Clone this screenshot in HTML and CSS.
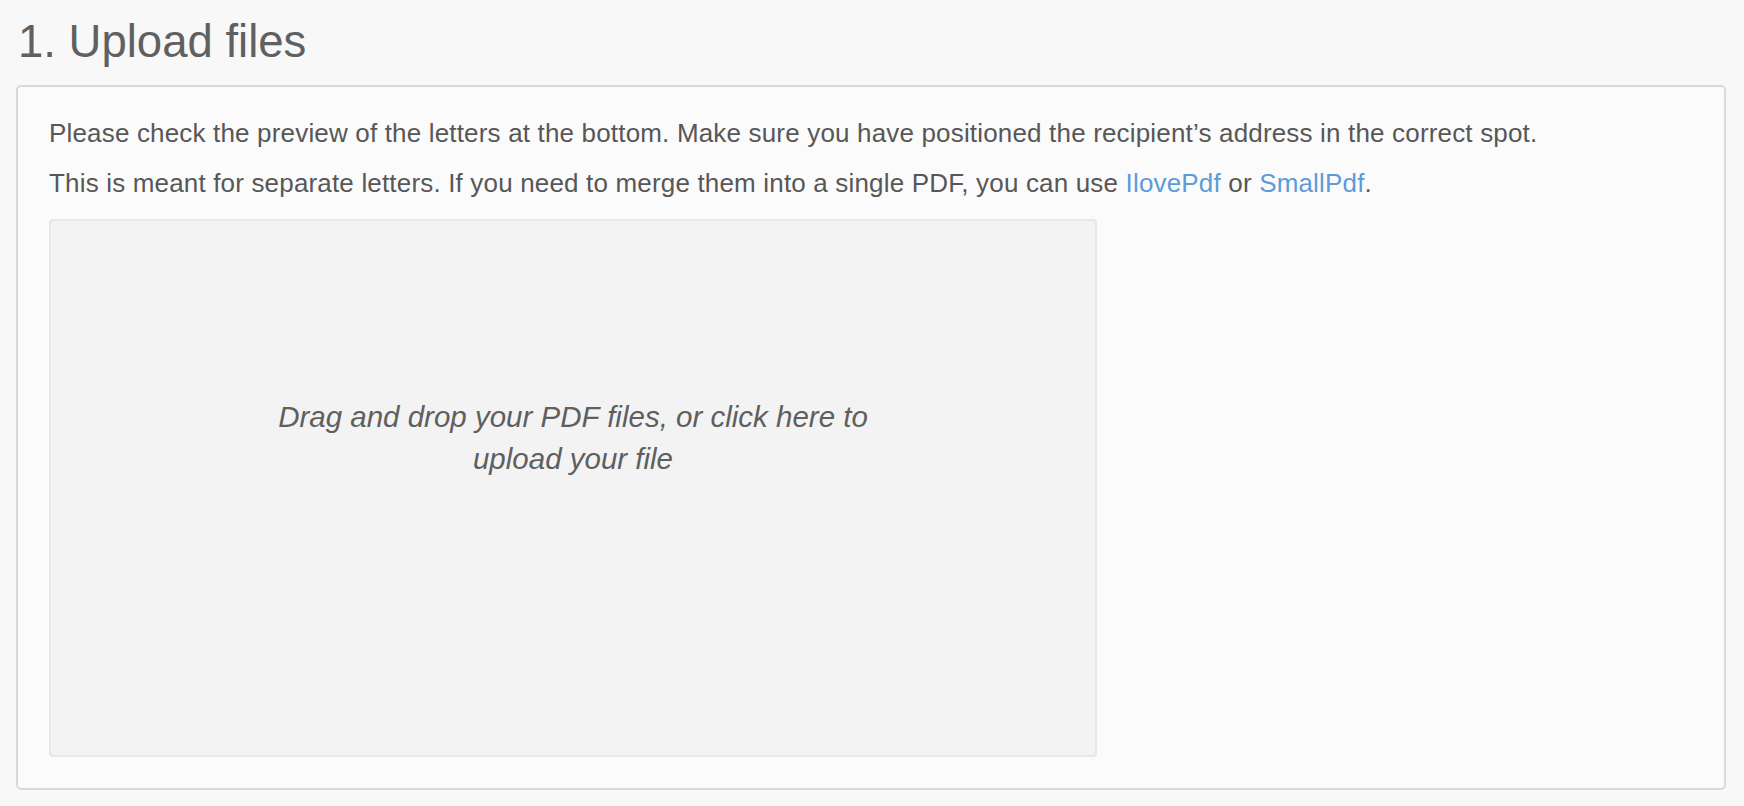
FILE: index.html
```html
<!DOCTYPE html>
<html lang="en">
<head>
<meta charset="utf-8">
<title>Upload files</title>
<link rel="stylesheet" href="styles.css">
</head>
<body>
  <main class="page">
    <h1 class="step-title">1. Upload files</h1>
    <section class="card">
      <p class="note">Please check the preview of the letters at the bottom. Make sure you have positioned the recipient’s address in the correct spot.</p>
      <p class="note">This is meant for separate letters. If you need to merge them into a single PDF, you can use <a class="link" href="#">IlovePdf</a> or <a class="link" href="#">SmallPdf</a>.</p>
      <div class="dropzone">
        <div class="dz-message">Drag and drop your PDF files, or click here to upload your file</div>
      </div>
    </section>
  </main>
</body>
</html>
```
FILE: styles.css
```css
html, body {
  margin: 0;
  padding: 0;
  background: #f8f8f8;
}

body {
  font-family: "Liberation Sans", Arial, Helvetica, sans-serif;
  color: #575757;
}

.page {
  padding: 17px 18px 0 16px;
}

.step-title {
  margin: 0 0 18px 2px;
  font-size: 45.5px;
  line-height: 50px;
  font-weight: normal;
  color: #606060;
}

.card {
  background: #fbfbfb;
  border: 2px solid #d9d9d9;
  border-radius: 5px;
  padding: 28px 31px 31px 31px;
}

.note {
  margin: 0 0 14px 0;
  font-size: 26px;
  line-height: 36px;
  letter-spacing: 0.17px;
}

.link {
  color: #5b9bd9;
  text-decoration: none;
}

.dropzone {
  margin-top: 18px;
  width: 1048px;
  height: 538px;
  box-sizing: border-box;
  background: #f3f3f3;
  border: 2px solid #e7e7e7;
  border-radius: 4px;
  padding-top: 175px;
}

.dz-message {
  width: 640px;
  margin: 0 auto;
  text-align: center;
  font-style: italic;
  font-size: 29.5px;
  line-height: 42px;
  color: #5f5f5f;
}
```
